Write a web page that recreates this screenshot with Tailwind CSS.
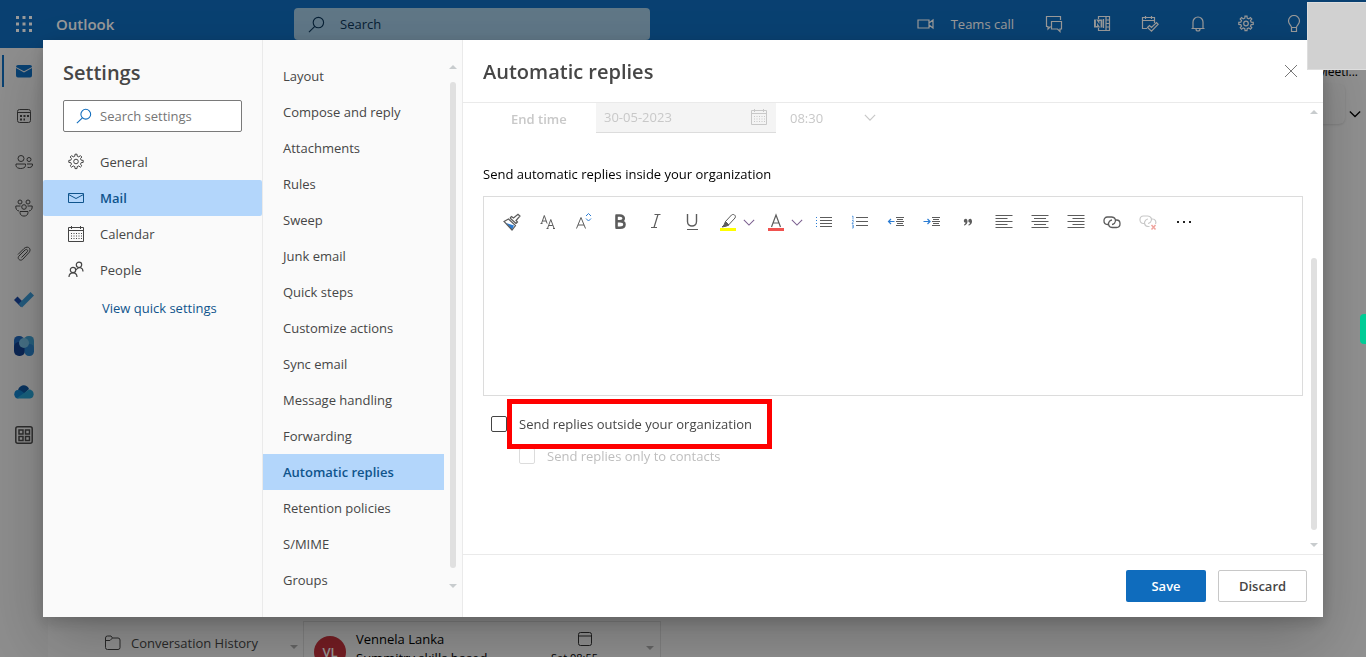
<!DOCTYPE html>
<html lang="en">
<head>
<meta charset="utf-8">
<meta name="viewport" content="width=device-width, initial-scale=1">
<title>Outlook settings</title>
<script src="https://cdn.jsdelivr.net/npm/@tailwindcss/browser@4"></script>
</head>
<body class="h-screen overflow-hidden font-['Open_Sans','Noto_Sans',sans-serif] text-[13px] leading-5 text-[#464646]">
<svg class="hidden" aria-hidden="true">
  <symbol id="gear" viewBox="0 0 18 18"><path d="M7.800 3.200 8 1.200h2l.2 2 1.600.7 1.600-1.300 1.400 1.400-1.300 1.600.7 1.600 2 .2v2l-2 .2-.7 1.600 1.300 1.600-1.400 1.400-1.600-1.300-1.600.7-.2 2H8l-.2-2-1.600-.7-1.600 1.300-1.400-1.400 1.300-1.600-.7-1.600-2-.2v-2l2-.2.7-1.600L3.200 4l1.400-1.400 1.600 1.300z"/><circle cx="9" cy="8.500" r="2.300"/></symbol>
  <symbol id="search" viewBox="0 0 18 18"><circle cx="11" cy="7" r="5.500"/><path d="M7.200 11 1 17"/></symbol>
  <symbol id="cal" viewBox="0 0 18 18"><path d="M1.500 2.500h15v14h-15zM1.500 5.500h15M4.500 1v3M13.500 1v3"/><path stroke-dasharray="1 1.500" d="M4 8.500h11M4 11h11M4 13.500h11"/></symbol>
  <symbol id="chev" viewBox="0 0 14 8"><path d="m1 1 6 6 6-6"/></symbol>
  <symbol id="link" viewBox="0 0 18 14"><path d="M5.500 9.500h-1C-.2 9.500-.2 2 4.500 2h4c4 0 5 4 3 6.200-.8.800-1.500 1.200-2.500 1.300M12 5h1.500c4.700 0 4.700 7.500 0 7.500h-4c-4 0-5-4-3-6.200C7.300 5.500 8 5.100 9 5"/></symbol>
</svg>

<!-- Mailbox -->
<div class="flex h-full flex-col bg-white">
  <header class="flex h-12 shrink-0 items-center bg-[#0f6cbd] text-white">
    <button aria-label="App launcher" class="flex w-12 justify-center"><svg class="size-4" viewBox="0 0 16 16" fill="currentColor"><path d="M0 0h3v3H0zM6.500 0h3v3h-3zM13 0h3v3h-3zM0 6.500h3v3H0zM6.500 6.500h3v3h-3zM13 6.500h3v3h-3zM0 13h3v3H0zM6.500 13h3v3h-3zM13 13h3v3h-3z"/></svg></button>
    <span class="ml-2 w-[238px] text-[15px] font-semibold">Outlook</span>
    <label class="flex h-8 w-[356px] items-center gap-[15px] rounded bg-[#9fc6e0] px-3.5 text-[#0b3558]">
      <svg class="size-[17px] shrink-0" fill="none" stroke="currentColor" stroke-width="1.200"><use href="#search"/></svg>
      <input aria-label="Search" placeholder="Search" class="min-w-0 flex-1 bg-transparent text-[13px] outline-none placeholder:text-[#0b3558]">
    </label>
    <div class="ml-auto flex items-center pr-12">
      <button class="flex items-center gap-4 pr-4"><svg class="h-3 w-[18px]" viewBox="0 0 18 12" fill="none" stroke="currentColor" stroke-width="1.200"><path d="M1 2h11v8H1zM12 5l4-3v8l-4-3"/></svg>Teams call</button>
      <button aria-label="Chat" class="flex w-12 justify-center"><svg class="size-[18px]" viewBox="0 0 18 18" fill="none" stroke="currentColor" stroke-width="1.200"><path d="M5.500 11.500 3 14v-2.500H1.500v-10h14V5M6.500 6.500h10v7.500H15v2.500L12.500 14h-6z"/></svg></button>
      <button aria-label="OneNote" class="flex w-12 justify-center"><svg class="size-[18px]" viewBox="0 0 18 18" fill="none" stroke="currentColor" stroke-width="1.200"><path d="M5.500 4V1.500h11v14h-11V13M13 1.500v14M13 5h3.500M13 8.500h3.500M13 12h3.500M10.500 4v9"/><path fill="currentColor" stroke="none" d="M1 4.500h8.500v8H1z"/><path class="stroke-[#0f6cbd]" d="M3.500 11V6L7 11V6"/></svg></button>
      <button aria-label="My day" class="flex w-12 justify-center"><svg class="size-[18px]" viewBox="0 0 18 18" fill="none" stroke="currentColor" stroke-width="1.200"><path d="M6 13.500H1.500v-11h12V8M1.500 5.500h12M4.500 1v3M10.500 1v3M6.500 12.500l2-2 2 2 5-5 1.700 1.700-6.700 7z"/></svg></button>
      <button aria-label="Notifications" class="flex w-12 justify-center"><svg class="size-[18px]" viewBox="0 0 18 18" fill="none" stroke="currentColor" stroke-width="1.200"><path d="M4 13.500V7a5 5 0 0 1 10 0v6.500M2.500 13.500h13M7 14a2 2 0 0 0 4 0"/></svg></button>
      <button aria-label="Settings" class="flex w-12 justify-center"><svg class="size-[18px]" fill="none" stroke="currentColor" stroke-width="1.200"><use href="#gear"/></svg></button>
      <button aria-label="Tips" class="flex w-12 justify-center"><svg class="size-[18px]" viewBox="0 0 18 18" fill="none" stroke="currentColor" stroke-width="1.200"><path d="M6.500 12.500c0-2-3-3-3-6.500a5.500 5.500 0 0 1 11 0c0 3.500-3 4.500-3 6.500zM6.500 12.500v4h5v-4"/></svg></button>
    </div>
  </header>

  <div class="flex min-h-0 flex-1">
    <nav aria-label="Apps" class="flex w-12 shrink-0 flex-col bg-[#ebebeb] text-[#4a4a4a]">
      <a href="#" aria-label="Mail" class="mt-[7px] ml-0.5 flex h-8 items-center border-l-2 border-[#0f6cbd] pl-3"><svg class="size-4" viewBox="0 0 16 16"><path class="fill-[#0f6cbd]" d="M0 5v7.500A2 2 0 0 0 2 14.500h12a2 2 0 0 0 2-2V5L8 9.500z"/><path class="fill-[#0f6cbd]" d="M0 4a2 2 0 0 1 2-2h12a2 2 0 0 1 2 2L8 8.300z"/></svg></a>
      <a href="#" aria-label="Calendar" class="mt-1.5 flex h-[46px] items-center justify-center"><svg class="size-4" viewBox="0 0 16 16" fill="none" stroke="currentColor"><rect x="1.500" y="1.500" width="13" height="13" rx="2"/><path d="M1.500 4.500h13"/><path stroke-width="2" stroke-dasharray="2 1.500" d="M4 8h9M4 11.500h5"/></svg></a>
      <a href="#" aria-label="People" class="flex h-[46px] items-center justify-center"><svg class="size-[18px]" viewBox="0 0 18 18" fill="none" stroke="currentColor"><circle cx="6" cy="5.500" r="3"/><circle cx="14" cy="6.500" r="2"/><path d="M1 11h9.500v1.500c0 4-9.500 4-9.500 0zM12 11h5.500v1c0 2-2.500 3-5 2.300"/></svg></a>
      <a href="#" aria-label="Groups" class="flex h-[46px] items-center justify-center"><svg class="size-[18px]" viewBox="0 0 18 18" fill="none" stroke="currentColor"><circle cx="5" cy="3" r="2"/><circle cx="13" cy="3" r="2"/><circle cx="9" cy="8" r="2.300"/><path d="M5 12.500h8v1.200c0 4.500-8 4.500-8 0zM5.500 7H.8c-.2 3 1 4.700 3.200 5M12.500 7h4.700c.2 3-1 4.700-3.200 5"/></svg></a>
      <a href="#" aria-label="Files" class="flex h-[46px] items-center justify-center"><svg class="size-4" viewBox="0 0 16 16" fill="none" stroke="currentColor"><path d="m2 8.500 6-6c4-3.500 8 .5 5 4L7 13c-2.500 3-6.500-.5-4-3l6-6c2-1.500 3.500.5 2 2l-5.500 5.500"/></svg></a>
      <a href="#" aria-label="To Do" class="flex h-[46px] items-center justify-center"><svg class="h-4 w-5" viewBox="0 0 20 16"><path class="fill-[#1946a0]" d="m0 8 3.500-3.500L8 9l-1 6z"/><path class="fill-[#3a96d0]" d="m4.500 12 12-12L20 3.500 8 15.500z"/></svg></a>
      <a href="#" aria-label="Bookings" class="flex h-[46px] items-center justify-center"><svg class="size-5" viewBox="0 0 20 20"><rect class="fill-[#1f66b8]" width="10" height="16" rx="4.500"/><rect class="fill-[#3f9ccc]" x="10" width="10" height="16" rx="4.500"/><rect class="fill-[#123f8c]" y="6" width="11" height="14" rx="5"/><rect class="fill-[#2a80c8]" x="10.500" y="8" width="9.500" height="12" rx="4.500"/><circle class="fill-[#73b9dc]" cx="10" cy="7" r="5"/></svg></a>
      <a href="#" aria-label="OneDrive" class="flex h-[46px] items-center justify-center"><svg class="h-[14px] w-5" viewBox="0 0 20 14"><path class="fill-[#0f559e]" d="M4 5C6-1 13-1 15 4l-5 5z"/><path class="fill-[#1080ca]" d="M4 13.500c-5 0-5-8.500 0-8.500 3 0 5 2 7 4z"/><path class="fill-[#28a0d0]" d="M3 13 15 4.500c6 0 6 9 1 9H4z"/></svg></a>
      <a href="#" aria-label="More apps" class="flex h-10 items-center justify-center"><svg class="size-[18px]" viewBox="0 0 18 18" fill="none" stroke="currentColor" stroke-width="1.500"><rect x=".8" y=".8" width="16.400" height="16.400" rx="2"/><path d="M4 4h4v4H4zM10.500 4h4v4h-4zM4 10.500h4v4H4zM10.500 10.500h4v4h-4z"/></svg></a>
    </nav>

    <main class="flex min-w-0 flex-1 flex-col bg-[#f0f0f0]">
      <div class="flex justify-end pt-4 pr-2 text-xs text-black">Meeti...</div>
      <div class="mt-1 flex items-center justify-end gap-1 pr-[5px]">
        <span class="h-10 w-40 rounded-md bg-[#ededed] shadow"></span>
        <button aria-label="Ribbon options" class="pt-5"><svg class="h-2 w-3" fill="none" stroke="#000" stroke-width="1.500"><use href="#chev"/></svg></button>
      </div>
      <div class="mt-auto flex h-9 shrink-0 overflow-hidden">
        <div class="flex w-[255px] shrink-0 items-center gap-2.5 pt-2 pr-[5px] pl-[57px]">
          <svg class="size-4 shrink-0" viewBox="0 0 16 16" fill="none" stroke="#444"><path d="M.5 3a2 2 0 0 1 2-2H6l1.500 2H13a2 2 0 0 1 2 2v7.500a2 2 0 0 1-2 2H2.500a2 2 0 0 1-2-2zM.5 5.500H5L7.500 3"/></svg>
          <span class="whitespace-nowrap">Conversation History</span>
          <svg class="mt-2 ml-auto h-1 w-2" viewBox="0 0 8 4"><path class="fill-[#aaa]" d="M0 0h8L4 4z"/></svg>
        </div>
        <div class="flex w-[358px] shrink-0 gap-2.5 border border-b-0 border-[#d8d8d8] pl-2.5 text-black">
          <span class="mt-[14px] flex size-8 shrink-0 items-center justify-center rounded-full bg-[#c4313b] font-semibold text-white">VL</span>
          <div class="w-[180px] pt-2 whitespace-nowrap">
            <div class="leading-[18px]">Vennela Lanka</div>
            <div>Summitry skills based</div>
          </div>
          <div class="flex w-[52px] flex-col items-end pt-2"><svg class="mr-1 size-[18px] shrink-0" viewBox="0 0 18 18" fill="none" stroke="#333"><rect x="2.500" y="2.500" width="13" height="13" rx="2"/><path d="M2.500 6h13"/></svg><span class="text-[11px] whitespace-nowrap">Sat 08:55</span></div>
          <svg class="mt-6 mr-1.5 ml-auto h-1 w-2" viewBox="0 0 8 4"><path class="fill-[#aaa]" d="M0 0h8L4 4z"/></svg>
        </div>
      </div>
    </main>
  </div>
</div>

<!-- Settings dialog -->
<div class="fixed inset-0 bg-black/40 px-[43px] py-10">
  <div role="dialog" aria-label="Settings" class="flex h-full bg-white shadow-[0_25px_58px_rgba(0,0,0,0.22),0_5px_14px_rgba(0,0,0,0.18)]">
    <section class="flex w-[220px] shrink-0 flex-col border-r border-[#eaeaea] bg-[#fafafa]">
      <h1 class="px-5 pt-[19px] text-xl leading-7 font-semibold">Settings</h1>
      <label class="mx-5 mt-[13px] flex h-8 items-center gap-2 rounded-xs border border-[#7a7a7a] bg-white pl-3">
        <svg class="size-4 shrink-0" fill="none" stroke="#0f6cbd" stroke-width="1.200"><use href="#search"/></svg>
        <input aria-label="Search settings" placeholder="Search settings" class="min-w-0 flex-1 outline-none placeholder:text-[#767676]">
      </label>
      <nav class="mt-3">
        <a href="#" class="flex h-9 items-center gap-[15px] pl-6"><svg class="size-[18px]" fill="none" stroke="#444"><use href="#gear"/></svg>General</a>
        <a href="#" class="flex h-9 items-center gap-[15px] rounded-xs bg-[#b3d6fb] pl-6 font-semibold text-[#0f548c]"><svg class="size-[18px]" viewBox="0 0 18 18" fill="none" stroke="currentColor"><path d="M1.500 4.500h15v9h-15zM1.500 5.500l7.500 4 7.500-4"/></svg>Mail</a>
        <a href="#" class="flex h-9 items-center gap-[15px] pl-6"><svg class="size-[18px]" fill="none" stroke="#444"><use href="#cal"/></svg>Calendar</a>
        <a href="#" class="flex h-9 items-center gap-[15px] pl-6"><svg class="size-[18px]" viewBox="0 0 18 18" fill="none" stroke="#444" stroke-width="1.200"><circle cx="6" cy="9" r="2.700"/><circle cx="12" cy="3.800" r="2.700"/><path d="M2 16c0-5.500 8-5.500 8 0M9 9c2.500-4 7-2.500 7 1.500"/></svg>People</a>
      </nav>
      <a href="#" class="mt-2.5 pl-[59px] text-[#0f548c]">View quick settings</a>
    </section>

    <section class="flex w-[200px] shrink-0 border-r border-[#eaeaea] bg-[#fafafa]">
      <nav class="flex-1 pt-[18px]">
        <a href="#" class="flex h-9 items-center pl-5">Layout</a>
        <a href="#" class="flex h-9 items-center pl-5">Compose and reply</a>
        <a href="#" class="flex h-9 items-center pl-5">Attachments</a>
        <a href="#" class="flex h-9 items-center pl-5">Rules</a>
        <a href="#" class="flex h-9 items-center pl-5">Sweep</a>
        <a href="#" class="flex h-9 items-center pl-5">Junk email</a>
        <a href="#" class="flex h-9 items-center pl-5">Quick steps</a>
        <a href="#" class="flex h-9 items-center pl-5">Customize actions</a>
        <a href="#" class="flex h-9 items-center pl-5">Sync email</a>
        <a href="#" class="flex h-9 items-center pl-5">Message handling</a>
        <a href="#" class="flex h-9 items-center pl-5">Forwarding</a>
        <a href="#" class="flex h-9 items-center bg-[#b3d6fb] pl-5 font-semibold text-[#0f548c]">Automatic replies</a>
        <a href="#" class="flex h-9 items-center pl-5">Retention policies</a>
        <a href="#" class="flex h-9 items-center pl-5">S/MIME</a>
        <a href="#" class="flex h-9 items-center pl-5">Groups</a>
      </nav>
      <div class="flex w-[18px] flex-col items-center pt-[25px] pb-[29px]">
        <svg class="h-1 w-2 shrink-0" viewBox="0 0 8 4"><path class="fill-[#c8ccce]" d="M0 4h8L4 0z"/></svg>
        <span class="mt-[13px] mb-4 w-1.5 flex-1 rounded-full bg-[#e0e0e0]"></span>
        <svg class="h-1 w-2 shrink-0" viewBox="0 0 8 4"><path class="fill-[#c8ccce]" d="M0 0h8L4 4z"/></svg>
      </div>
    </section>

    <section class="flex min-w-0 flex-1 flex-col">
      <div class="flex h-[63px] shrink-0 items-center justify-between border-b border-[#eaeaea] pr-[25px] pl-5">
        <h2 class="pt-0.5 text-xl leading-7 font-semibold">Automatic replies</h2>
        <button aria-label="Close"><svg class="size-[14px]" viewBox="0 0 14 14" fill="none" stroke="#777"><path d="m1 1 12 12M13 1 1 13"/></svg></button>
      </div>

      <div class="flex min-h-0 flex-1">
        <div class="min-w-0 flex-1 pl-5">
          <div class="flex h-[30px] items-center text-[13px] text-[#c8c8c8]">
            <label for="end-date" class="w-[113px] pt-0.5 pl-7 font-semibold">End time</label>
            <div class="flex h-[30px] w-[180px] items-center border-b border-[#dcdcdc] bg-[#f4f4f4] px-2 pb-px">
              <input id="end-date" value="30-05-2023" disabled class="min-w-0 flex-1">
              <svg class="size-[18px] shrink-0" fill="none" stroke="currentColor"><use href="#cal"/></svg>
            </div>
            <div class="relative ml-[14px] w-[86px]">
              <select aria-label="End hour" disabled class="w-full appearance-none opacity-100"><option>08:30</option></select>
              <svg class="pointer-events-none absolute top-1.5 right-0 h-[7px] w-3" fill="none" stroke="currentColor" stroke-width="1.400"><use href="#chev"/></svg>
            </div>
          </div>

          <p class="mt-[31px] text-black">Send automatic replies inside your organization</p>

          <div class="mt-3 h-[200px] border border-[#dcdcdc]">
            <div role="toolbar" aria-label="Formatting" class="flex h-[50px] items-center pl-2.5 text-[#5c5c5c]">
              <button aria-label="Format painter" class="flex w-9 justify-center"><svg class="size-[18px]" viewBox="0 0 18 18" fill="none" stroke="currentColor" stroke-width="1.200"><path fill="#2b7cd3" stroke="none" d="m3 10 8 2.500L9 17z"/><path d="M1 8.500 5.500 6l7 6.500L9 17zM7 5l6 5.500M7 5l1.500-1.500 2 1.500L15 1.200 17 3l-4 4.500 1.500 1.500L13 10.500"/></svg></button>
              <button aria-label="Font" class="flex w-9 justify-center"><svg class="size-[18px]" viewBox="0 0 18 18" fill="none" stroke="currentColor"><path d="m2.500 10.500 2.800-8 2.800 8M3.500 8h3.700M8.500 15.500l3.300-9 3.300 9M9.800 12.500h4M1.500 10.500h2M7.500 15.500h2M14 15.500h2"/></svg></button>
              <button aria-label="Font size" class="flex w-9 justify-center"><svg class="size-[18px]" viewBox="0 0 18 18" fill="none" stroke="currentColor"><path d="m1.500 15.500 4.500-11 4.500 11M3 12h6"/><path stroke="#2b7cd3" d="m11 3 2.500-2.500L16 3M11 5.500 13.500 8 16 5.500"/></svg></button>
              <button aria-label="Bold" class="flex w-9 justify-center"><svg class="size-[18px]" viewBox="0 0 18 18" fill="none" stroke="currentColor" stroke-width="2.600"><path d="M5.500 2.300v12.500M4.500 2.500H9c5 0 5 5.700 0 5.700H5.500M9 8.200c6 0 6 6.500 0 6.500H4.500"/></svg></button>
              <button aria-label="Italic" class="flex w-9 justify-center"><svg class="size-[18px]" viewBox="0 0 18 18" fill="none" stroke="currentColor" stroke-width="1.200"><path d="M7.500 1.500h6M4 14.500h6M11 1.500 7 14.500"/></svg></button>
              <button aria-label="Underline" class="flex w-9 justify-center"><svg class="size-[18px]" viewBox="0 0 18 18" fill="none" stroke="currentColor" stroke-width="1.400"><path d="M4.500 1v7.500c0 6 9 6 9 0V1"/><path stroke-width="1" d="M4 16.500h11"/></svg></button>
              <button aria-label="Highlight" class="flex w-9 justify-center"><svg class="size-[18px]" viewBox="0 0 18 18" fill="none" stroke="currentColor"><path stroke="#ff0" stroke-width="3" d="M1 16.500h16"/><path d="m6.500 8.500 6-6.500c2-1.500 5 .5 3.500 3L9.500 12z"/><path fill="currentColor" d="m6.500 8.500 3.500 3.500-3 1.200-4 .8 2-2z"/></svg></button>
              <button aria-label="Highlight colours" class="-ml-[3px] flex w-[15px]"><svg class="h-[7px] w-3" fill="none" stroke="#7b5f8f" stroke-width="1.200"><use href="#chev"/></svg></button>
              <button aria-label="Font colour" class="flex w-9 justify-center"><svg class="size-[18px]" viewBox="0 0 18 18" fill="none" stroke="currentColor" stroke-width="1.200"><path stroke="#f0524f" stroke-width="3" d="M1 16.500h16"/><path d="M4.500 14 9 2l4.500 12M6 10h6"/></svg></button>
              <button aria-label="Font colours" class="-ml-[3px] flex w-[15px]"><svg class="h-[7px] w-3" fill="none" stroke="#7b5f8f" stroke-width="1.200"><use href="#chev"/></svg></button>
              <button aria-label="Bullets" class="flex w-9 justify-center"><svg class="size-[18px]" viewBox="0 0 18 18" fill="none" stroke="currentColor"><path d="M5 4.500h12M5 7.500h12M5 10.500h12M5 13.500h12"/><path stroke="#2b7cd3" d="M1 4.500h1M1 7.500h1M1 10.500h1M1 13.500h1"/></svg></button>
              <button aria-label="Numbering" class="flex w-9 justify-center"><svg class="size-[18px]" viewBox="0 0 18 18" fill="none" stroke="currentColor"><path d="M5 4.500h12M5 8.500h12M5 12.500h12"/><path stroke="#2b7cd3" stroke-width=".7" d="M1 3.500 2 3v3.500M1 7.500h1.300v1.300L1 10.500h1.500M1 12h1.300v3H1m.5-1.500h.8"/></svg></button>
              <button aria-label="Decrease indent" class="flex w-9 justify-center"><svg class="size-[18px]" viewBox="0 0 18 18" fill="none" stroke="currentColor"><path d="M9 4.500h8M10 6.500h6M9 8.500h8M10 10.500h6M9 12.500h8"/><path stroke="#2b7cd3" stroke-width="1.200" d="M7.500 8.500H1.500M4 6 1.500 8.500 4 11"/></svg></button>
              <button aria-label="Increase indent" class="flex w-9 justify-center"><svg class="size-[18px]" viewBox="0 0 18 18" fill="none" stroke="currentColor"><path d="M9 4.500h8M10 6.500h6M9 8.500h8M10 10.500h6M9 12.500h8"/><path stroke="#2b7cd3" stroke-width="1.200" d="M.5 8.500h6M4.500 6 7 8.500 4.500 11"/></svg></button>
              <button aria-label="Quote" class="flex w-9 justify-center"><svg class="size-[18px]" viewBox="0 0 18 18" fill="currentColor"><path d="M7.500 6c2 2 1 6-2.500 6.500v-1c1-.3 1.500-1 1.500-2C4 9.500 4.500 5.500 7 5.700zM12 6c2 2 1 6-2.500 6.500v-1c1-.3 1.500-1 1.500-2-2.500 0-2-4 .5-3.800z"/></svg></button>
              <button aria-label="Align left" class="flex w-9 justify-center"><svg class="size-[18px]" viewBox="0 0 18 18" fill="none" stroke="currentColor"><path d="M.5 2.500h17M.5 5.500h12M.5 8.500h17M.5 11.500h12M.5 14.500h17"/></svg></button>
              <button aria-label="Align center" class="flex w-9 justify-center"><svg class="size-[18px]" viewBox="0 0 18 18" fill="none" stroke="currentColor"><path d="M.5 2.500h17M3 5.500h12M.5 8.500h17M3 11.500h12M.5 14.500h17"/></svg></button>
              <button aria-label="Align right" class="flex w-9 justify-center"><svg class="size-[18px]" viewBox="0 0 18 18" fill="none" stroke="currentColor"><path d="M.5 2.500h17M5.500 5.500h12M.5 8.500h17M5.500 11.500h12M.5 14.500h17"/></svg></button>
              <button aria-label="Insert link" class="flex w-9 justify-center"><svg class="h-[14px] w-[18px]" fill="none" stroke="currentColor" stroke-width="1.300"><use href="#link"/></svg></button>
              <button aria-label="Remove link" disabled class="flex w-9 justify-center"><svg class="h-4 w-[18px]" viewBox="0 0 18 16" fill="none" stroke="#c8c8c8" stroke-width="1.200"><path d="M5.500 9.500h-1C-.2 9.500-.2 2 4.500 2h4c4 0 5 4 3 6.200-.8.800-1.500 1.200-2.500 1.300M12 5h1.500c3 0 4 3 3 5M10.500 12.500h-1c-4 0-5-4-3-6.200C7.300 5.500 8 5.100 9 5"/><path stroke="#f0a49e" stroke-width="1.500" d="m12.500 11 4 4.500M16.500 11l-4 4.500"/></svg></button>
              <button aria-label="More" class="flex w-9 justify-center"><svg class="h-1 w-4" viewBox="0 0 16 4" fill="#222"><path d="M1 1h2v2H1zM7 1h2v2H7zM13 1h2v2h-2z"/></svg></button>
            </div>
          </div>

          <div class="relative mt-[18px] flex h-5 items-center pl-2">
            <input id="outside" type="checkbox" class="size-4 appearance-none rounded-xs border border-[#444] bg-white">
            <label for="outside" class="pl-3">Send replies outside your organization</label>
            <span class="pointer-events-none absolute -top-[15px] left-6 z-10 h-[50px] w-[265px] border-5 border-[#f00]"></span>
          </div>
          <div class="mt-3 flex h-5 items-center pl-9 text-[#bebebe]">
            <input id="contacts" type="checkbox" disabled class="size-4 appearance-none rounded-xs border border-[#dcdcdc]">
            <label for="contacts" class="pl-3">Send replies only to contacts</label>
          </div>
        </div>
        <div class="flex w-5 flex-col items-center py-[7px] pl-0.5">
          <svg class="h-1 w-2 shrink-0" viewBox="0 0 8 4"><path class="fill-[#c8ccce]" d="M0 4h8L4 0z"/></svg>
          <span class="mt-36 mb-[13px] w-1.5 flex-1 rounded-full bg-[#e0e0e0]"></span>
          <svg class="h-1 w-2 shrink-0" viewBox="0 0 8 4"><path class="fill-[#c8ccce]" d="M0 0h8L4 4z"/></svg>
        </div>
      </div>

      <div class="flex h-[63px] shrink-0 items-center justify-end gap-3 border-t border-[#eaeaea] pr-4 font-semibold">
        <button class="h-8 w-20 rounded-xs bg-[#0f6cbd] text-white">Save</button>
        <button class="h-8 w-[89px] rounded-xs border border-[#c8c8c8] bg-white">Discard</button>
      </div>
    </section>
  </div>
</div>

<div class="fixed top-0.5 right-0 h-[68px] w-[59px] border border-r-0 border-[#dedede] bg-[#d1d1d1]"></div>
<div class="fixed top-[314px] right-0 h-[30px] w-1.5 rounded-l bg-[#00cc96]"></div>
</body>
</html>
